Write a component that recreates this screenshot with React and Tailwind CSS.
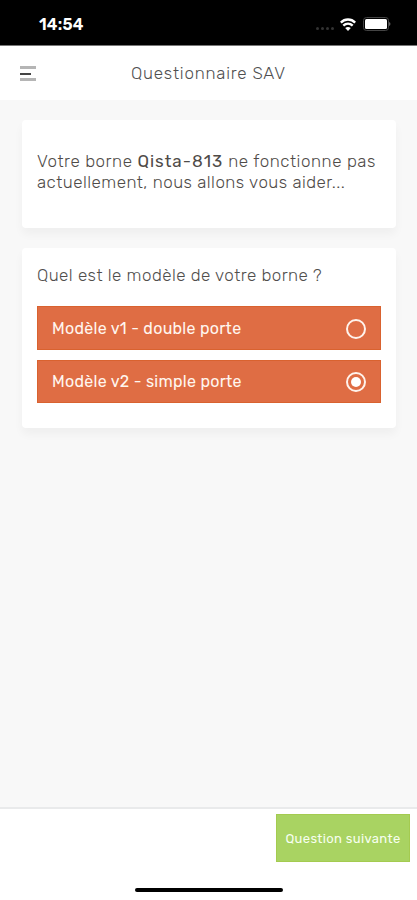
import React from "react";

const options = [
  { id: "v1", label: "Modèle v1 - double porte" },
  { id: "v2", label: "Modèle v2 - simple porte" },
];

function StatusBar() {
  return (
    <div className="flex h-[46px] shrink-0 items-start justify-between border-b border-[#777] bg-black pl-[39px] pr-[25px] text-white">
      <span className="mt-[14px] text-[16px] font-semibold leading-[22px] tracking-[0.2px]">14:54</span>
      <div className="mt-[17px] flex items-center">
        <div className="mr-[6px] mt-[9px] flex gap-[2px]">
          <span className="h-[3px] w-[3px] rounded-full bg-[#333]"></span>
          <span className="h-[3px] w-[3px] rounded-full bg-[#333]"></span>
          <span className="h-[3px] w-[3px] rounded-full bg-[#333]"></span>
          <span className="h-[3px] w-[3px] rounded-full bg-[#333]"></span>
        </div>
        <svg width="16" height="13" viewBox="0 0 16 13" fill="none" stroke="white" strokeWidth="2.4">
          <path d="M0.8 4.6 C4.8 0.4 11.2 0.4 15.2 4.6" />
          <path d="M3.3 7.7 C6 5.1 10 5.1 12.7 7.7" />
          <path d="M8 13 L5.2 10.1 C6.9 8.6 9.1 8.6 10.8 10.1 Z" fill="white" stroke="none" />
        </svg>
        <svg className="ml-[7px]" width="29" height="14" viewBox="0 0 29 14">
          <rect x="0.5" y="0.5" width="25" height="13" rx="3" fill="none" stroke="#444" />
          <rect x="2" y="2" width="22" height="10" rx="1.5" fill="white" />
          <path d="M26.2 5 C27.8 5.8 27.8 8.2 26.2 9 Z" fill="#777" />
        </svg>
      </div>
    </div>
  );
}

function Header() {
  return (
    <header className="relative flex h-[54px] shrink-0 items-center justify-center bg-white pt-[1px]">
      <button className="absolute left-[20px] top-[20px] flex flex-col gap-[3px]" aria-label="Menu">
        <span className="h-[3px] w-[16px] bg-[#b5b5b5]"></span>
        <span className="my-[0.5px] h-[2px] w-[11px] bg-[#444]"></span>
        <span className="h-[3px] w-[16px] bg-[#b5b5b5]"></span>
      </button>
      <h1 className="whitespace-nowrap text-[17px] font-light tracking-[0.77px] text-[#505050]">Questionnaire SAV</h1>
    </header>
  );
}

function Radio({ checked }) {
  return (
    <span className="flex h-[20px] w-[20px] items-center justify-center rounded-full border-2 border-[#fff3ec]">
      {checked && <span className="h-[10px] w-[10px] rounded-full bg-white"></span>}
    </span>
  );
}

export default function App() {
  const [selected, setSelected] = React.useState("v2");

  return (
    <div className="flex h-[900px] w-[417px] flex-col overflow-hidden bg-[#f8f8f8] font-['Rubik','Roboto',sans-serif]">
      <StatusBar />
      <Header />
      <main className="flex flex-1 flex-col gap-[20px] pl-[22px] pr-[21px] pt-[20px]">
        <section className="h-[108px] rounded-[4px] bg-white px-[15px] pt-[31px] text-[17px] font-light leading-[21px] text-[#4f4b48] shadow-[0_6px_10px_rgba(0,0,0,0.04)]">
          <p className="whitespace-nowrap tracking-[0.55px]">
            Votre borne <span className="font-normal tracking-[1px]">Qista-813</span> ne fonctionne pas
          </p>
          <p className="whitespace-nowrap tracking-[0.47px]">actuellement, nous allons vous aider...</p>
        </section>
        <section className="h-[180px] rounded-[4px] bg-white px-[15px] pt-[17px] shadow-[0_6px_10px_rgba(0,0,0,0.04)]">
          <h2 className="whitespace-nowrap text-[17px] font-light leading-[21px] tracking-[0.44px] text-[#504e4c]">
            Quel est le modèle de votre borne ?
          </h2>
          <div className="mt-[20px] flex flex-col gap-[10px]">
            {options.map((option) => (
              <button
                key={option.id}
                onClick={() => setSelected(option.id)}
                className="flex h-[43.5px] items-center justify-between border border-[#d9622f] bg-[#df6d44] px-[14px] pt-[2px] text-[16px] text-[#fff6ef]"
              >
                <span className="tracking-[0.28px]">{option.label}</span>
                <Radio checked={selected === option.id} />
              </button>
            ))}
          </div>
        </section>
      </main>
      <footer className="flex h-[93px] shrink-0 flex-col items-end border-t-2 border-[#e9eaeb] bg-white">
        <button className="mr-[7px] mt-[5px] h-[48px] w-[134px] whitespace-nowrap border border-[#a4cb50] bg-[#a9d362] pt-[1px] text-[13px] tracking-[0.35px] text-[#f7fff0]">
          Question suivante
        </button>
        <div className="mr-[134px] mt-[26px] h-[4px] w-[148px] rounded-full bg-black"></div>
      </footer>
    </div>
  );
}
